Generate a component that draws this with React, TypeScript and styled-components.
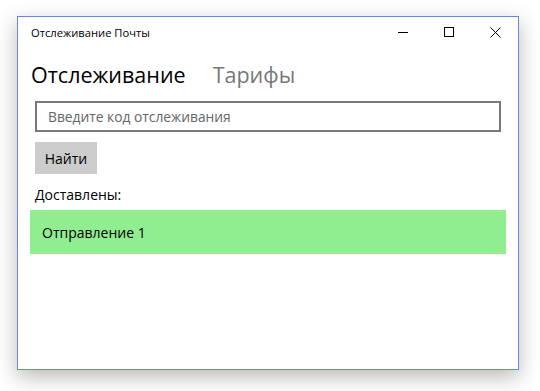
import React from 'react';
import styled, {createGlobalStyle} from "styled-components";

const GlobalStyle = createGlobalStyle`
    html, body {
        margin: 0;
        padding: 0;
        background: #ffffff;
    }

    body {
        font-family: "Open Sans", "Noto Sans", sans-serif;
        color: #000000;
    }
`

const tabs = [
    {title: "Отслеживание", active: true},
    {title: "Тарифы", active: false},
]

const delivered = ["Отправление 1"]

export default function App() {
    return (
        <>
            <GlobalStyle/>
            <Desktop>
                <Window>
                    <TitleBar>
                        <Title>Отслеживание Почты</Title>
                        <Controls>
                            <ControlButton aria-label="minimize">
                                <svg width="10" height="10" viewBox="0 0 10 10">
                                    <path d="M0 5.5h10" stroke="#000" strokeWidth="1"/>
                                </svg>
                            </ControlButton>
                            <ControlButton aria-label="maximize">
                                <svg width="10" height="10" viewBox="0 0 10 10">
                                    <rect x="0.5" y="0.5" width="9" height="9" fill="none" stroke="#000" strokeWidth="1"/>
                                </svg>
                            </ControlButton>
                            <ControlButton aria-label="close">
                                <svg width="11" height="11" viewBox="0 0 11 11">
                                    <path d="M0.5 0.5l10 10M10.5 0.5l-10 10" stroke="#000" strokeWidth="1"/>
                                </svg>
                            </ControlButton>
                        </Controls>
                    </TitleBar>
                    <Content>
                        <Tabs>
                            {tabs.map(tab => (
                                <Tab key={tab.title} active={tab.active}>{tab.title}</Tab>
                            ))}
                        </Tabs>
                        <Form>
                            <Field placeholder="Введите код отслеживания"/>
                            <SearchButton>Найти</SearchButton>
                            <SectionLabel>Доставлены:</SectionLabel>
                        </Form>
                        <ParcelList>
                            {delivered.map(item => (
                                <ParcelItem key={item}>{item}</ParcelItem>
                            ))}
                        </ParcelList>
                    </Content>
                </Window>
            </Desktop>
        </>
    );
}

const Desktop = styled.div`
    width: 540px;
    height: 391px;
    padding: 16px 0 0 17px;
    box-sizing: border-box;
    overflow: hidden;
`

const Window = styled.div`
    width: 502px;
    height: 354px;
    box-sizing: border-box;
    border: 1px solid #6f87d3;
    background: #ffffff;
    box-shadow: 0 7px 20px rgba(0, 0, 0, 0.28);
    display: flex;
    flex-direction: column;
`

const TitleBar = styled.div`
    height: 30px;
    display: flex;
    align-items: center;
    justify-content: space-between;
    padding-left: 13px;
`

const Title = styled.span`
    font-size: 11.2px;
    color: #000000;
`

const Controls = styled.div`
    display: flex;
    height: 100%;
`

const ControlButton = styled.div`
    width: 46px;
    height: 100%;
    display: flex;
    align-items: center;
    justify-content: center;
`

const Content = styled.div`
    display: flex;
    flex-direction: column;
    padding: 0 12px 0 12px;
`

const Tabs = styled.div`
    display: flex;
    gap: 27px;
    padding: 11px 0 0 1px;
    height: 44px;
    box-sizing: border-box;
`

const Tab = styled.span<{ active: boolean }>`
    font-size: 21.5px;
    line-height: 33px;
    color: ${props => props.active ? "#000000" : "#777777"};
`

const Form = styled.div`
    display: flex;
    flex-direction: column;
    align-items: flex-start;
    padding: 10px 5px 0;
`

const Field = styled.input`
    width: 466px;
    height: 31px;
    box-sizing: border-box;
    border: 2px solid #7a7a7a;
    padding: 0 11px;
    outline: none;
    font-family: "Open Sans", "Noto Sans", sans-serif;
    font-size: 13.8px;
    color: #000000;

    &::placeholder {
        color: #666666;
    }
`

const SearchButton = styled.button`
    margin-top: 10px;
    width: 62px;
    height: 32px;
    border: none;
    background: #cccccc;
    font-family: "Open Sans", "Noto Sans", sans-serif;
    font-size: 14px;
    color: #000000;
    padding: 0;
`

const SectionLabel = styled.div`
    margin-top: 10px;
    font-size: 14px;
    line-height: 22px;
`

const ParcelList = styled.div`
    display: flex;
    flex-direction: column;
    margin-top: 4px;
`

const ParcelItem = styled.div`
    height: 44px;
    display: flex;
    align-items: center;
    padding-left: 12px;
    background: #90ee90;
    font-size: 14px;
`
